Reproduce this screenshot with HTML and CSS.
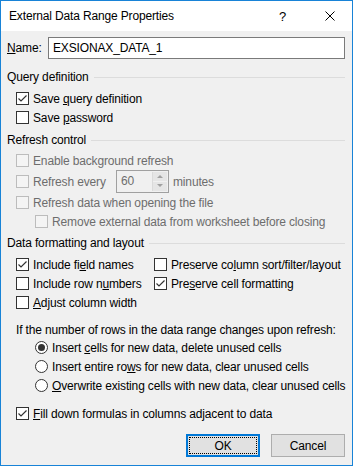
FILE: index.html
```html
<!DOCTYPE html>
<html>
<head>
<meta charset="utf-8">
<link rel="stylesheet" href="styles.css">
</head>
<body>
<div class="window">
	<div class="titlebar">
		<span class="title">External Data Range Properties</span>
		<span class="help">?</span>
		<span class="close"><svg width="10" height="10" viewBox="0 0 10 10"><path d="M0.5 0.5 L9.5 9.5 M9.5 0.5 L0.5 9.5" stroke="#000" stroke-width="1"/></svg></span>
	</div>
	<div class="content">
		<div class="name-row">
			<span class="name-label"><u>N</u>ame:</span>
			<div class="textbox">EXSIONAX_DATA_1</div>
		</div>

		<div class="group"><span>Query definition</span></div>
		<div class="row first"><span class="box"><svg width="11" height="11" viewBox="0 0 11 11"><path d="M1.5 5.5 L4 8 L9.5 2.5" class="tick"/></svg></span><span>Save <u>q</u>uery definition</span></div>
		<div class="row"><span class="box"></span><span>Save <u>p</u>assword</span></div>

		<div class="group g2"><span>Refresh control</span></div>
		<div class="row disabled r-first"><span class="box"></span><span>Enable background refresh</span></div>
		<div class="row disabled spin-row"><span class="box"></span><span class="every">Refresh every</span>
			<div class="spinner">
				<span class="spin-val">60</span>
				<span class="spin-btns">
					<span class="spin-up"></span>
					<span class="spin-down"></span>
				</span>
			</div>
			<span class="minutes">minutes</span>
		</div>
		<div class="row disabled"><span class="box"></span><span>Refresh data when opening the file</span></div>
		<div class="row disabled indent"><span class="box"></span><span>Remove external data from worksheet before closing</span></div>

		<div class="group g3"><span>Data formatting and layout</span></div>
		<div class="grid">
			<div class="row"><span class="box"><svg width="11" height="11" viewBox="0 0 11 11"><path d="M1.5 5.5 L4 8 L9.5 2.5" class="tick"/></svg></span><span>Include fi<u>e</u>ld names</span></div>
			<div class="row col2"><span class="box"></span><span>Preserve co<u>l</u>umn sort/filter/layout</span></div>
			<div class="row"><span class="box"></span><span>Include row n<u>u</u>mbers</span></div>
			<div class="row col2"><span class="box"><svg width="11" height="11" viewBox="0 0 11 11"><path d="M1.5 5.5 L4 8 L9.5 2.5" class="tick"/></svg></span><span>Pre<u>s</u>erve cell formatting</span></div>
			<div class="row"><span class="box"></span><span><u>A</u>djust column width</span></div>
		</div>

		<div class="question">If the number of rows in the data range changes upon refresh:</div>
		<div class="row indent"><span class="radio on"></span><span>Insert <u>c</u>ells for new data, delete unused cells</span></div>
		<div class="row indent"><span class="radio"></span><span>Insert entire ro<u>w</u>s for new data, clear unused cells</span></div>
		<div class="row indent"><span class="radio"></span><span><u>O</u>verwrite existing cells with new data, clear unused cells</span></div>

		<div class="row fill"><span class="box"><svg width="11" height="11" viewBox="0 0 11 11"><path d="M1.5 5.5 L4 8 L9.5 2.5" class="tick"/></svg></span><span><u>F</u>ill down formulas in columns adjacent to data</span></div>

		<div class="buttons">
			<div class="btn default"><span class="focus">OK</span></div>
			<div class="btn">Cancel</div>
		</div>
	</div>
</div>
</body>
</html>
```

FILE: styles.css
```css
html, body {
	margin: 0;
	padding: 0;
}
body {
	width: 353px;
	height: 466px;
	font-family: "Liberation Sans", Arial, sans-serif;
	font-size: 12px;
	letter-spacing: -0.15px;
	color: #000;
	background: #f0f0f0;
}
u {
	text-decoration: underline;
	text-underline-offset: 1px;
}

.window {
	box-sizing: border-box;
	width: 353px;
	height: 466px;
	border: 1px solid #1883d7;
	background: #f0f0f0;
	display: flex;
	flex-direction: column;
}

.titlebar {
	height: 30px;
	flex: none;
	background: #fff;
	display: flex;
	align-items: center;
	padding-left: 8px;
}
.title {
	flex: 1;
}
.help {
	width: 12px;
	margin-right: 34px;
	font-size: 13px;
}
.close {
	width: 10px;
	height: 10px;
	margin-right: 17px;
	margin-top: -1px;
}
.close svg {
	display: block;
}

.content {
	display: flex;
	flex-direction: column;
	padding: 0 7px 0 6px;
}

.name-row {
	display: flex;
	align-items: center;
	margin-top: 6px;
	height: 22px;
}
.name-label {
	width: 41px;
}
.textbox {
	flex: 1;
	box-sizing: border-box;
	height: 22px;
	border: 1px solid #7a7a7a;
	background: #fff;
	padding-left: 4px;
	line-height: 20px;
}

.group {
	display: flex;
	align-items: center;
	height: 16px;
	margin-top: 10px;
}
.group::after {
	content: "";
	flex: 1;
	height: 1px;
	background: #dcdcdc;
	margin-left: 5px;
}
.group + .row {
	margin-top: 4px;
}
.content .g2 {
	margin-top: 5px;
}
.content .g3 {
	margin-top: 4px;
}

.row {
	display: flex;
	align-items: center;
	height: 19px;
	padding-left: 9px;
	white-space: nowrap;
}
.content .r-first {
	margin-top: 3px;
}
.indent {
	padding-left: 28px;
}

.box {
	box-sizing: border-box;
	width: 13px;
	height: 13px;
	border: 1px solid #333;
	background: #fff;
	margin-right: 4px;
	flex: none;
}
.box svg {
	display: block;
}
.tick {
	fill: none;
	stroke: #333;
	stroke-width: 1.2;
}

.disabled {
	color: #6d6d6d;
}
.disabled .box {
	border-color: #bcbcbc;
	background: #f4f4f4;
}

.spin-row {
	height: 23px;
}
.every {
	width: 83px;
}
.spinner {
	box-sizing: border-box;
	width: 53px;
	height: 23px;
	border: 1px solid #a0a0a0;
	background: #f0f0f0;
	display: flex;
}
.spin-val {
	flex: 1;
	padding-left: 4px;
	line-height: 21px;
}
.spin-btns {
	width: 14px;
	display: flex;
	flex-direction: column;
	border-left: 1px solid #dadada;
	margin: 1px 1px 1px 0;
}
.spin-up, .spin-down {
	flex: 1;
	background: #e5e5e5;
	position: relative;
}
.spin-up {
	border-bottom: 1px solid #f0f0f0;
}
.spin-up::after, .spin-down::after {
	content: "";
	position: absolute;
	left: 4px;
	width: 0;
	height: 0;
	border-left: 3px solid transparent;
	border-right: 3px solid transparent;
}
.spin-up::after {
	top: 3px;
	border-bottom: 3px solid #a0a0a0;
}
.spin-down::after {
	top: 2px;
	border-top: 3px solid #a0a0a0;
}
.minutes {
	margin-left: 4px;
}

.grid {
	display: grid;
	grid-template-columns: 138px 1fr;
	grid-auto-rows: 19px;
	row-gap: 0;
	margin-top: 4px;
}
.grid .col2 {
	padding-left: 9px;
}

.question {
	height: 16px;
	line-height: 16px;
	margin-top: 10px;
	padding-left: 9px;
	white-space: nowrap;
}

.radio {
	box-sizing: border-box;
	width: 13px;
	height: 13px;
	border: 1px solid #333;
	border-radius: 50%;
	background: #fff;
	margin-right: 4px;
	flex: none;
	display: flex;
	align-items: center;
	justify-content: center;
}
.radio.on::after {
	content: "";
	width: 7px;
	height: 7px;
	border-radius: 50%;
	background: #333;
}

.fill {
	margin-top: 9px;
}

.buttons {
	display: flex;
	justify-content: flex-end;
	gap: 11px;
	margin-top: 11px;
}
.btn {
	box-sizing: border-box;
	width: 74px;
	height: 23px;
	border: 1px solid #adadad;
	background: #e1e1e1;
	display: flex;
	align-items: center;
	justify-content: center;
}
.btn.default {
	border: 2px solid #0078d7;
	padding: 1px;
}
.focus {
	box-sizing: border-box;
	width: 100%;
	height: 100%;
	border: 1px dotted #000;
	display: flex;
	align-items: center;
	justify-content: center;
}
```
